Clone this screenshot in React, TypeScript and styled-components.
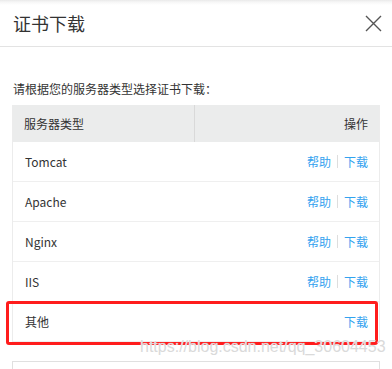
import React from 'react';
import styled, { createGlobalStyle } from 'styled-components';

const GlobalStyle = createGlobalStyle`
  html, body {
    margin: 0;
    padding: 0;
    background: #fff;
  }
  body {
    font-family: 'Noto Sans CJK SC', 'Noto Sans', sans-serif;
    color: #333;
  }
`;

const Dialog = styled.div`
  position: relative;
  width: 392px;
  height: 369px;
  overflow: hidden;
  background: #fff;
`;

const Header = styled.div`
  height: 47px;
  box-sizing: border-box;
  display: flex;
  align-items: center;
  justify-content: space-between;
  padding: 0 10px 0 13px;
  border-bottom: 1px solid #e3e3e3;
  background: linear-gradient(#e9e9e9 0, #f6f6f6 2px, #fff 5px);
`;

const Title = styled.h2`
  margin: 0;
  font-size: 18px;
  font-weight: 400;
  color: #333;
  line-height: 24px;
`;

const CloseButton = styled.button`
  width: 18px;
  height: 18px;
  padding: 0;
  border: none;
  background: none;
  display: flex;
  align-items: center;
  justify-content: center;
  cursor: pointer;
`;

const Body = styled.div`
  padding: 0 12px;
`;

const Hint = styled.p`
  margin: 34px 0 0 1px;
  font-size: 12px;
  line-height: 16px;
  color: #333;
`;

const Table = styled.div`
  margin-top: 8px;
  border-left: 1px solid #ececec;
  border-right: 1px solid #ececec;
`;

const HeadRow = styled.div`
  display: grid;
  grid-template-columns: 181px 1fr;
  height: 37px;
  background: #ebecec;
  font-size: 12px;
`;

const HeadCell = styled.div<{ align?: 'left' | 'right' }>`
  display: flex;
  align-items: center;
  justify-content: ${({ align }) => (align === 'right' ? 'flex-end' : 'flex-start')};
  padding: 0 11px;
  color: #333;
  & + & {
    border-left: 1px solid #d9d9d9;
  }
`;

const Row = styled.div`
  position: relative;
  display: flex;
  align-items: center;
  justify-content: space-between;
  height: 40px;
  box-sizing: border-box;
  padding: 0 11px 0 12px;
  border-bottom: 1px solid #efefef;
  font-size: 12px;
`;

const Name = styled.span`
  color: #333;
`;

const Actions = styled.div`
  display: flex;
  align-items: center;
`;

const Link = styled.a`
  color: #33a2ef;
  text-decoration: none;
  font-size: 12px;
  cursor: pointer;
`;

const Divider = styled.span`
  width: 1px;
  height: 13px;
  margin: 0 6px;
  background: #dedede;
`;

const Highlight = styled.div`
  position: absolute;
  top: -1px;
  left: -7px;
  right: 1px;
  bottom: -4px;
  border: 3px solid #ff1c1c;
  border-radius: 3px;
  pointer-events: none;
`;

const NextPanel = styled.div`
  margin-top: 19px;
  height: 30px;
  border: 1px solid #e0e0e0;
  border-bottom: none;
`;

const Watermark = styled.div`
  position: absolute;
  left: 140px;
  top: 337px;
  font-family: 'Liberation Sans', Arial, sans-serif;
  font-size: 16px;
  line-height: 20px;
  color: #dadada;
  text-shadow: 0 0 1px #fff;
  white-space: nowrap;
  pointer-events: none;
`;

const servers = [
  { name: 'Tomcat', help: true },
  { name: 'Apache', help: true },
  { name: 'Nginx', help: true },
  { name: 'IIS', help: true },
  { name: '其他', help: false },
];

const App = () => {
  return (
    <>
      <GlobalStyle />
      <Dialog>
        <Header>
          <Title>证书下载</Title>
          <CloseButton aria-label="关闭">
            <svg width="17" height="17" viewBox="0 0 17 17">
              <path d="M1 1 L16 16 M16 1 L1 16" stroke="#555" strokeWidth="1.4" fill="none" />
            </svg>
          </CloseButton>
        </Header>
        <Body>
          <Hint>请根据您的服务器类型选择证书下载：</Hint>
          <Table>
            <HeadRow>
              <HeadCell>服务器类型</HeadCell>
              <HeadCell align="right">操作</HeadCell>
            </HeadRow>
            {servers.map((s) => (
              <Row key={s.name}>
                <Name>{s.name}</Name>
                <Actions>
                  {s.help && (
                    <>
                      <Link>帮助</Link>
                      <Divider />
                    </>
                  )}
                  <Link>下载</Link>
                </Actions>
                {!s.help && <Highlight />}
              </Row>
            ))}
          </Table>
          <NextPanel />
        </Body>
        <Watermark>https://blog.csdn.net/qq_30604453</Watermark>
      </Dialog>
    </>
  );
};

export default App;
